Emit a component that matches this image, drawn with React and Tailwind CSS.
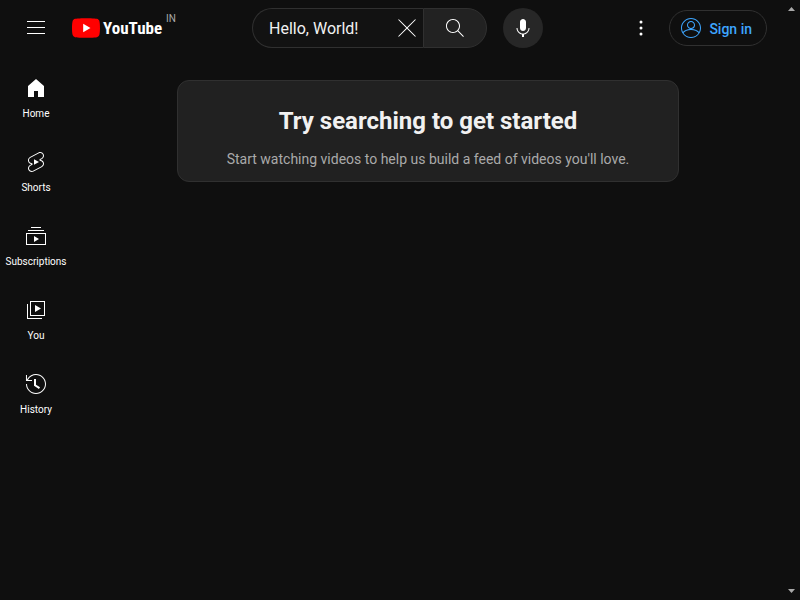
import React from "react";

function Icon({ d, className = "size-6" }) {
  return (
    <svg viewBox="0 0 24 24" fill="currentColor" fillRule="evenodd" aria-hidden="true" className={`block shrink-0 ${className}`}>
      <path d={d} />
    </svg>
  );
}

const icons = {
  menu: "M21 6H3V5h18v1zm0 5H3v1h18v-1zm0 6H3v1h18v-1z",
  close: "m12.71 12 8.15 8.15-.71.71L12 12.71l-8.15 8.15-.71-.71L11.29 12 3.15 3.85l.71-.71L12 11.29l8.15-8.15.71.71L12.71 12z",
  search:
    "m20.87 20.17-5.59-5.59C16.35 13.35 17 11.75 17 10c0-3.87-3.13-7-7-7s-7 3.13-7 7 3.13 7 7 7c1.75 0 3.35-.65 4.58-1.71l5.59 5.59.7-.71zM10 16c-3.31 0-6-2.69-6-6s2.69-6 6-6 6 2.69 6 6-2.69 6-6 6z",
  mic: "M12 3c-1.66 0-3 1.37-3 3.07v5.86c0 1.7 1.34 3.07 3 3.07s3-1.37 3-3.07V6.07C15 4.37 13.66 3 12 3zm6.5 9h-1c0 3.03-2.47 5.5-5.5 5.5S6.5 15.03 6.5 12h-1c0 3.24 2.39 5.93 5.5 6.41V21h2v-2.59c3.11-.48 5.5-3.17 5.5-6.41z",
  more: "M12 16.5a1.5 1.5 0 1 1 0 3 1.5 1.5 0 0 1 0-3zm0-6a1.5 1.5 0 1 1 0 3 1.5 1.5 0 0 1 0-3zm0-6a1.5 1.5 0 1 1 0 3 1.5 1.5 0 0 1 0-3z",
  account:
    "M12 2C6.48 2 2 6.48 2 12s4.48 10 10 10 10-4.48 10-10S17.52 2 12 2zm0 1c4.96 0 9 4.04 9 9 0 1.42-.34 2.76-.93 3.96-1.53-1.72-3.98-2.89-7.38-3.03A3.99 3.99 0 0 0 16 9c0-2.21-1.79-4-4-4S8 6.79 8 9c0 1.97 1.43 3.6 3.31 3.93-3.4.14-5.85 1.31-7.38 3.03C3.34 14.76 3 13.42 3 12c0-4.96 4.04-9 9-9zM9 9c0-1.65 1.35-3 3-3s3 1.35 3 3-1.35 3-3 3-3-1.35-3-3zm3 12c-3.16 0-5.94-1.64-7.55-4.12C6.01 14.93 8.61 13.9 12 13.9c3.39 0 5.99 1.03 7.55 2.98C17.94 19.36 15.16 21 12 21z",
};

const navItems = [
  { label: "Home", d: "M4 21V10.08l8-6.96 8 6.96V21h-6v-6h-4v6H4z" },
  {
    label: "Shorts",
    d: "M10 14.65v-5.3L15 12l-5 2.65zm7.77-4.33c-.77-.32-1.2-.5-1.2-.5L18 9.06c1.84-.96 2.53-3.23 1.56-5.06s-3.24-2.53-5.07-1.56L6 6.94c-1.29.68-2.07 2.04-2 3.49.07 1.42.93 2.67 2.22 3.25.03.01 1.2.5 1.2.5L6 14.93c-1.83.97-2.53 3.24-1.56 5.07.97 1.83 3.24 2.53 5.07 1.56l8.5-4.5c1.29-.68 2.06-2.04 1.99-3.49-.07-1.42-.94-2.68-2.23-3.25zm-.23 5.86-8.5 4.5c-1.34.71-3.01.2-3.72-1.14-.71-1.34-.2-3.01 1.14-3.72l2.04-1.08v-1.21l-.69-.28-1.11-.46c-.99-.41-1.65-1.35-1.7-2.41-.05-1.06.52-2.06 1.46-2.56l8.5-4.5c1.34-.71 3.01-.2 3.72 1.14.71 1.34.2 3.01-1.14 3.72L15.5 9.26v1.21l1.8.74c.99.41 1.65 1.35 1.7 2.41.05 1.06-.52 2.06-1.46 2.56z",
  },
  { label: "Subscriptions", d: "M10 18v-6l5 3-5 3zm7-15H7v1h10V3zm3 3H4v1h16V6zm2 3H2v12h20V9zM3 10h18v10H3V10z" },
  { label: "You", d: "m11 7 6 3.5L11 14V7zm7 13H4V6H3v15h15v-1zm3-2H6V3h15v15zM7 17h13V4H7v13z" },
  {
    label: "History",
    d: "M14.97 16.95 10 13.87V7h2v5.76l4.03 2.49-1.06 1.7zM22 12c0 5.51-4.49 10-10 10S2 17.51 2 12h1c0 4.96 4.04 9 9 9s9-4.04 9-9-4.04-9-9-9C8.81 3 5.92 4.64 4.28 7.38c-.11.18-.22.37-.31.56L3.94 8H8v1H1.96V3h1v4.74c.04-.09.07-.17.11-.25.11-.22.23-.42.35-.63C5.22 3.86 8.51 2 12 2c5.51 0 10 4.49 10 10z",
  },
];

function Logo() {
  return (
    <a href="#home" aria-label="YouTube Home" className="flex h-10 items-center pl-4">
      <svg viewBox="0 0 28.57 20" className="block h-5 w-7 shrink-0" aria-hidden="true">
        <path
          fill="#f00"
          d="M27.97 3.12C27.64 1.89 26.68.93 25.45.6 23.22 0 14.29 0 14.29 0S5.35 0 3.12.6C1.89.93.93 1.89.6 3.12 0 5.35 0 10 0 10s0 4.65.6 6.88c.33 1.23 1.29 2.19 2.52 2.52C5.35 20 14.29 20 14.29 20s8.93 0 11.16-.6c1.23-.33 2.19-1.29 2.52-2.52.6-2.23.6-6.88.6-6.88s0-4.65-.6-6.88z"
        />
        <path fill="#fff" d="M11.43 14.29 18.85 10l-7.42-4.29z" />
      </svg>
      <span className="pl-[3px] font-['Roboto_Condensed','Liberation_Sans_Narrow',Roboto,sans-serif] text-[17px] leading-5 font-bold text-white">YouTube</span>
      <span className="self-start pt-[5px] pl-1 text-[10px] leading-3 text-[#aaa]">IN</span>
    </a>
  );
}

function Header() {
  return (
    <header className="flex h-14 items-center justify-between pr-[18px] pl-4">
      <div className="flex w-[236px] shrink-0 items-center">
        <button type="button" aria-label="Guide" className="flex size-10 items-center justify-center text-white">
          <Icon d={icons.menu} />
        </button>
        <Logo />
      </div>

      <form className="flex max-w-[700px] min-w-0 flex-1 items-center" onSubmit={(e) => e.preventDefault()}>
        <div className="flex h-10 min-w-0 flex-1 items-center rounded-l-full border border-r-0 border-[#303030] bg-[#121212] pr-1 pl-4">
          <input
            type="text"
            aria-label="Search"
            defaultValue="Hello, World!"
            className="w-full min-w-0 flex-1 bg-transparent pt-px text-base leading-6 text-[#f1f1f1] outline-none"
          />
          <button type="button" aria-label="Clear search query" className="flex w-6 shrink-0 items-center justify-center text-white">
            <Icon d={icons.close} />
          </button>
        </div>
        <button
          type="submit"
          aria-label="Search"
          className="flex h-10 w-16 shrink-0 items-center justify-center rounded-r-full border border-[#303030] bg-[#222] text-white"
        >
          <Icon d={icons.search} />
        </button>
        <button
          type="button"
          aria-label="Search with your voice"
          className="ml-4 flex size-10 shrink-0 items-center justify-center rounded-full bg-[#272727] text-white"
        >
          <Icon d={icons.mic} />
        </button>
      </form>

      <div className="flex shrink-0 items-center gap-2 pl-[78px]">
        <button type="button" aria-label="Settings" className="flex size-10 items-center justify-center text-white">
          <Icon d={icons.more} />
        </button>
        <a href="#signin" className="flex h-9 items-center gap-1.5 rounded-full border border-[#303030] pr-[14px] pl-[9px] text-sm font-medium text-[#3ea6ff]">
          <Icon d={icons.account} />
          <span className="pt-px">Sign in</span>
        </a>
      </div>
    </header>
  );
}

function Sidebar() {
  return (
    <nav aria-label="Guide" className="flex w-[72px] shrink-0 flex-col pt-1">
      {navItems.map((item) => (
        <a key={item.label} href={`#${item.label.toLowerCase()}`} className="flex h-[74px] flex-col items-center gap-[7px] pt-4 text-white">
          <Icon d={item.d} />
          <span className="text-[10px] leading-[14px]">{item.label}</span>
        </a>
      ))}
    </nav>
  );
}

export default function App() {
  return (
    <div className="flex min-h-screen bg-[#0f0f0f] font-[Roboto,'Liberation_Sans',sans-serif] text-[#f1f1f1]">
      <div className="min-w-0 flex-1">
        <Header />
        <div className="flex">
          <Sidebar />
          <main className="flex flex-1 items-start justify-center pt-6 pr-px">
            <section className="rounded-xl border border-[#303030] bg-[#212121] px-[49px] pt-6 pb-3 text-center">
              <h1 className="text-2xl leading-8 font-bold">Try searching to get started</h1>
              <p className="pt-3 text-sm leading-5 text-[#aaa]">Start watching videos to help us build a feed of videos you'll love.</p>
            </section>
          </main>
        </div>
      </div>
      <div className="flex w-[15px] shrink-0 flex-col items-center justify-between py-[7px] pr-0.5 text-[#a9a9a9]" aria-hidden="true">
        <svg viewBox="0 0 7 4" className="block h-1 w-[7px]" fill="currentColor">
          <path d="M0 4h7L3.5 0z" />
        </svg>
        <svg viewBox="0 0 7 4" className="block h-1 w-[7px]" fill="currentColor">
          <path d="M0 0h7L3.5 4z" />
        </svg>
      </div>
    </div>
  );
}
